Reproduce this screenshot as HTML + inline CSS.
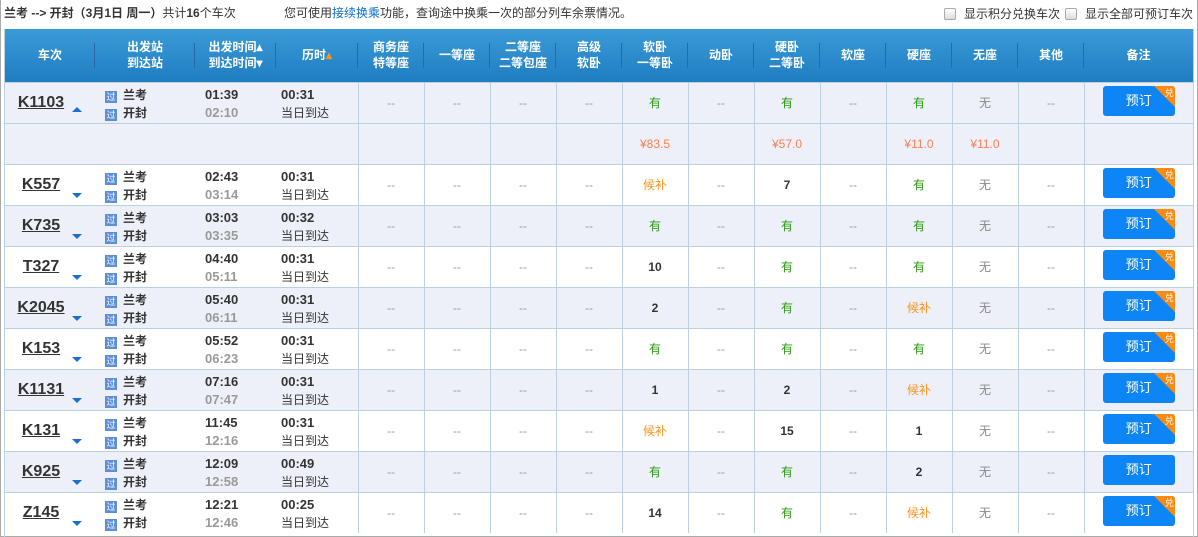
<!DOCTYPE html>
<html><head><meta charset="utf-8"><style>
*{margin:0;padding:0;box-sizing:border-box}
body{width:1198px;height:537px;overflow:hidden;background:#fff;font-family:"Liberation Sans","Noto Sans CJK SC",sans-serif;font-size:12px;color:#333;position:relative;border-left:1px solid #aaa;border-right:1px solid #aaa;border-bottom:1px solid #aaa}
.top{position:absolute;top:4px;left:3px;font-size:12px;white-space:nowrap}
.top b{font-weight:bold}
.top2{position:absolute;top:4px;left:283px;font-size:12px}
.top2 a{color:#0a6fd1}
.chk{position:absolute;top:5px;font-size:12px;white-space:nowrap}
.chk i{display:inline-block;width:12px;height:12px;border:1px solid #aaa;border-radius:2px;background:linear-gradient(#fff,#ddd);vertical-align:-2px;margin-right:8px}
table{position:absolute;left:4px;top:29px;border-collapse:collapse;table-layout:fixed;width:1188px}
th{height:53px;background:linear-gradient(#3b9bd8,#1f7dc1);color:#fff;font-weight:bold;font-size:12px;line-height:16px;position:relative}
th.s:after{content:"";position:absolute;right:0;top:14px;height:25px;border-right:1px solid #2a68a8}
td{height:41px;border-top:1px solid #bcd0e0;border-left:1px solid #bcd0e0;text-align:center;font-size:12px;position:relative}
td.n{border-left:none}
tr.a td{background:#edf0f8}
tr.b td{background:#fff}
.tn{position:absolute;left:8px;top:11px;width:56px;text-align:center;font-size:16px;font-weight:bold;text-decoration:underline;color:#333}
.ar{position:absolute;left:67px;top:28px;width:0;height:0;border-left:5px solid transparent;border-right:5px solid transparent}
.dn{border-top:5px solid #1a6fd6}.up{border-bottom:5px solid #1a6fd6;top:24px}
.st{position:absolute;left:10px;top:3px;text-align:left;line-height:18px;font-weight:bold;font-size:12px}
.st i{display:inline-block;width:12px;height:12px;background:#5d8fd9;color:#fff;font-style:normal;font-size:9px;line-height:12px;text-align:center;margin-right:6px;vertical-align:-1px;font-weight:normal}
.tm{position:absolute;left:10px;top:3px;text-align:left;line-height:18px;font-weight:bold;font-size:13px}
.tm span{color:#999}
.du{position:absolute;left:5px;top:3px;text-align:left;line-height:18px;font-size:12px}
.du b{font-size:13px}
.g{color:#2a9a10}.o{color:#f7941d}.w{color:#888}.d{color:#999}.num{font-weight:bold}.p{color:#fa7e55}
.bt{display:inline-block;width:72px;height:30px;background:#0d85f5;border-radius:3px;color:#fff;line-height:30px;font-size:13px;position:relative;overflow:hidden}
.bt.x:after{content:"";position:absolute;right:0;top:0;border-top:21px solid #f98b13;border-left:21px solid transparent}
.bt.x b{position:absolute;right:1px;top:-8px;font-size:9px;z-index:2;font-weight:normal;color:#fff}
</style></head><body>
<div class="top"><b>兰考 --&gt; 开封（3月1日 周一）</b>共计<b>16</b>个车次</div>
<div class="top2">您可使用<a>接续换乘</a>功能，查询途中换乘一次的部分列车余票情况。</div>
<div class="chk" style="left:943px"><i></i>显示积分兑换车次</div>
<div class="chk" style="left:1064px"><i></i>显示全部可预订车次</div>
<table>
<colgroup><col style="width:90px"><col style="width:100px"><col style="width:81px"><col style="width:82px"><col span="11" style="width:66px"><col style="width:109px"></colgroup>
<tr><th class="s">车次</th><th class="s">出发站<br>到达站</th><th class="s">出发时间▴<br>到达时间▾</th><th class="s">历时<span style="color:#f7941d">▴</span></th><th class="s">商务座<br>特等座</th><th class="s">一等座</th><th class="s">二等座<br>二等包座</th><th class="s">高级<br>软卧</th><th class="s">软卧<br>一等卧</th><th class="s">动卧</th><th class="s">硬卧<br>二等卧</th><th class="s">软座</th><th class="s">硬座</th><th class="s">无座</th><th class="s">其他</th><th>备注</th></tr>
<tr class="a"><td class="n"><span class="tn">K1103</span><span class="ar up"></span></td><td class="n"><div class="st"><i>过</i>兰考<br><i>过</i>开封</div></td><td class="n"><div class="tm">01:39<br><span>02:10</span></div></td><td class="n"><div class="du"><b>00:31</b><br>当日到达</div></td><td class="d">--</td><td class="d">--</td><td class="d">--</td><td class="d">--</td><td class="g">有</td><td class="d">--</td><td class="g">有</td><td class="d">--</td><td class="g">有</td><td class="w">无</td><td class="d">--</td><td><span class="bt x">预订<b>兑</b></span></td></tr>
<tr class="a"><td class="n"></td><td class="n"></td><td class="n"></td><td class="n"></td><td></td><td></td><td></td><td></td><td class="p">¥83.5</td><td></td><td class="p">¥57.0</td><td></td><td class="p">¥11.0</td><td class="p">¥11.0</td><td></td><td></td></tr>
<tr class="b"><td class="n"><span class="tn">K557</span><span class="ar dn"></span></td><td class="n"><div class="st"><i>过</i>兰考<br><i>过</i>开封</div></td><td class="n"><div class="tm">02:43<br><span>03:14</span></div></td><td class="n"><div class="du"><b>00:31</b><br>当日到达</div></td><td class="d">--</td><td class="d">--</td><td class="d">--</td><td class="d">--</td><td class="o">候补</td><td class="d">--</td><td class="num">7</td><td class="d">--</td><td class="g">有</td><td class="w">无</td><td class="d">--</td><td><span class="bt x">预订<b>兑</b></span></td></tr>
<tr class="a"><td class="n"><span class="tn">K735</span><span class="ar dn"></span></td><td class="n"><div class="st"><i>过</i>兰考<br><i>过</i>开封</div></td><td class="n"><div class="tm">03:03<br><span>03:35</span></div></td><td class="n"><div class="du"><b>00:32</b><br>当日到达</div></td><td class="d">--</td><td class="d">--</td><td class="d">--</td><td class="d">--</td><td class="g">有</td><td class="d">--</td><td class="g">有</td><td class="d">--</td><td class="g">有</td><td class="w">无</td><td class="d">--</td><td><span class="bt x">预订<b>兑</b></span></td></tr>
<tr class="b"><td class="n"><span class="tn">T327</span><span class="ar dn"></span></td><td class="n"><div class="st"><i>过</i>兰考<br><i>过</i>开封</div></td><td class="n"><div class="tm">04:40<br><span>05:11</span></div></td><td class="n"><div class="du"><b>00:31</b><br>当日到达</div></td><td class="d">--</td><td class="d">--</td><td class="d">--</td><td class="d">--</td><td class="num">10</td><td class="d">--</td><td class="g">有</td><td class="d">--</td><td class="g">有</td><td class="w">无</td><td class="d">--</td><td><span class="bt x">预订<b>兑</b></span></td></tr>
<tr class="a"><td class="n"><span class="tn">K2045</span><span class="ar dn"></span></td><td class="n"><div class="st"><i>过</i>兰考<br><i>过</i>开封</div></td><td class="n"><div class="tm">05:40<br><span>06:11</span></div></td><td class="n"><div class="du"><b>00:31</b><br>当日到达</div></td><td class="d">--</td><td class="d">--</td><td class="d">--</td><td class="d">--</td><td class="num">2</td><td class="d">--</td><td class="g">有</td><td class="d">--</td><td class="o">候补</td><td class="w">无</td><td class="d">--</td><td><span class="bt x">预订<b>兑</b></span></td></tr>
<tr class="b"><td class="n"><span class="tn">K153</span><span class="ar dn"></span></td><td class="n"><div class="st"><i>过</i>兰考<br><i>过</i>开封</div></td><td class="n"><div class="tm">05:52<br><span>06:23</span></div></td><td class="n"><div class="du"><b>00:31</b><br>当日到达</div></td><td class="d">--</td><td class="d">--</td><td class="d">--</td><td class="d">--</td><td class="g">有</td><td class="d">--</td><td class="g">有</td><td class="d">--</td><td class="g">有</td><td class="w">无</td><td class="d">--</td><td><span class="bt x">预订<b>兑</b></span></td></tr>
<tr class="a"><td class="n"><span class="tn">K1131</span><span class="ar dn"></span></td><td class="n"><div class="st"><i>过</i>兰考<br><i>过</i>开封</div></td><td class="n"><div class="tm">07:16<br><span>07:47</span></div></td><td class="n"><div class="du"><b>00:31</b><br>当日到达</div></td><td class="d">--</td><td class="d">--</td><td class="d">--</td><td class="d">--</td><td class="num">1</td><td class="d">--</td><td class="num">2</td><td class="d">--</td><td class="o">候补</td><td class="w">无</td><td class="d">--</td><td><span class="bt x">预订<b>兑</b></span></td></tr>
<tr class="b"><td class="n"><span class="tn">K131</span><span class="ar dn"></span></td><td class="n"><div class="st"><i>过</i>兰考<br><i>过</i>开封</div></td><td class="n"><div class="tm">11:45<br><span>12:16</span></div></td><td class="n"><div class="du"><b>00:31</b><br>当日到达</div></td><td class="d">--</td><td class="d">--</td><td class="d">--</td><td class="d">--</td><td class="o">候补</td><td class="d">--</td><td class="num">15</td><td class="d">--</td><td class="num">1</td><td class="w">无</td><td class="d">--</td><td><span class="bt x">预订<b>兑</b></span></td></tr>
<tr class="a"><td class="n"><span class="tn">K925</span><span class="ar dn"></span></td><td class="n"><div class="st"><i>过</i>兰考<br><i>过</i>开封</div></td><td class="n"><div class="tm">12:09<br><span>12:58</span></div></td><td class="n"><div class="du"><b>00:49</b><br>当日到达</div></td><td class="d">--</td><td class="d">--</td><td class="d">--</td><td class="d">--</td><td class="g">有</td><td class="d">--</td><td class="g">有</td><td class="d">--</td><td class="num">2</td><td class="w">无</td><td class="d">--</td><td><span class="bt">预订</span></td></tr>
<tr class="b"><td class="n"><span class="tn">Z145</span><span class="ar dn"></span></td><td class="n"><div class="st"><i>过</i>兰考<br><i>过</i>开封</div></td><td class="n"><div class="tm">12:21<br><span>12:46</span></div></td><td class="n"><div class="du"><b>00:25</b><br>当日到达</div></td><td class="d">--</td><td class="d">--</td><td class="d">--</td><td class="d">--</td><td class="num">14</td><td class="d">--</td><td class="g">有</td><td class="d">--</td><td class="o">候补</td><td class="w">无</td><td class="d">--</td><td><span class="bt x">预订<b>兑</b></span></td></tr>
</table>
<div style="position:absolute;left:3px;top:29px;width:1px;height:508px;background:#bcd0e0"></div>
<div style="position:absolute;left:1192px;top:29px;width:1px;height:508px;background:#bcd0e0"></div>
</body></html>
